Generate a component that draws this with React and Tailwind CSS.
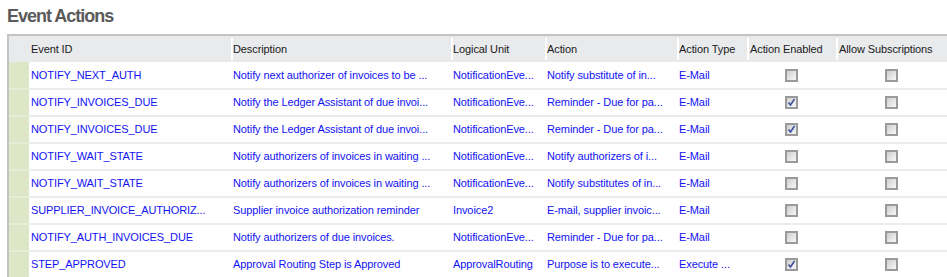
import React from "react";

const rows = [
  {
    id: "NOTIFY_NEXT_AUTH",
    desc: "Notify next authorizer of invoices to be ...",
    lu: "NotificationEve...",
    action: "Notify substitute of in...",
    type: "E-Mail",
    enabled: false,
  },
  {
    id: "NOTIFY_INVOICES_DUE",
    desc: "Notify the Ledger Assistant of due invoi...",
    lu: "NotificationEve...",
    action: "Reminder - Due for pa...",
    type: "E-Mail",
    enabled: true,
  },
  {
    id: "NOTIFY_INVOICES_DUE",
    desc: "Notify the Ledger Assistant of due invoi...",
    lu: "NotificationEve...",
    action: "Reminder - Due for pa...",
    type: "E-Mail",
    enabled: true,
  },
  {
    id: "NOTIFY_WAIT_STATE",
    desc: "Notify authorizers of invoices in waiting ...",
    lu: "NotificationEve...",
    action: "Notify authorizers of i...",
    type: "E-Mail",
    enabled: false,
  },
  {
    id: "NOTIFY_WAIT_STATE",
    desc: "Notify authorizers of invoices in waiting ...",
    lu: "NotificationEve...",
    action: "Notify substitutes of in...",
    type: "E-Mail",
    enabled: false,
  },
  {
    id: "SUPPLIER_INVOICE_AUTHORIZ...",
    desc: "Supplier invoice authorization reminder",
    lu: "Invoice2",
    action: "E-mail, supplier invoic...",
    type: "E-Mail",
    enabled: false,
  },
  {
    id: "NOTIFY_AUTH_INVOICES_DUE",
    desc: "Notify authorizers of due invoices.",
    lu: "NotificationEve...",
    action: "Reminder - Due for pa...",
    type: "E-Mail",
    enabled: false,
  },
  {
    id: "STEP_APPROVED",
    desc: "Approval Routing Step is Approved",
    lu: "ApprovalRouting",
    action: "Purpose is to execute...",
    type: "Execute ...",
    enabled: true,
  },
];

const Checkbox = ({ checked }) => (
  <span className="relative inline-block w-[13px] h-[13px] border-2 border-[#9a9a9a] bg-gradient-to-br from-[#cfcfcf] to-[#f7f7f7] align-middle">
    {checked && (
      <svg viewBox="0 0 9 9" className="absolute inset-0 w-[9px] h-[9px]">
        <path d="M1.5 4.5 L3.5 7 L7.5 1" fill="none" stroke="#3d4f9e" strokeWidth="1.6" />
      </svg>
    )}
  </span>
);

const headers = [
  "Event ID",
  "Description",
  "Logical Unit",
  "Action",
  "Action Type",
  "Action Enabled",
  "Allow Subscriptions",
];

const App = () => {
  return (
    <div className="w-[947px] h-[277px] overflow-hidden bg-white" style={{ fontFamily: '"Liberation Sans", Arial, sans-serif' }}>
      {/* Title */}
      <div className="pl-[7px] pt-[4px] h-[34px] text-[18px] font-bold text-[#5a5a5a] tracking-[-1px] leading-[24px]">
        Event Actions
      </div>

      {/* Table */}
      <div className="ml-[7px] border-l-2 border-t-2 border-[#c3c3c3]">
        <table className="table-fixed border-collapse w-[960px] text-[11px] tracking-[-0.1px]">
          <colgroup>
            <col className="w-[20px]" />
            <col className="w-[202px]" />
            <col className="w-[220px]" />
            <col className="w-[94px]" />
            <col className="w-[132px]" />
            <col className="w-[70px]" />
            <col className="w-[89px]" />
            <col className="w-[133px]" />
          </colgroup>
          <thead>
            <tr className="h-[26px] bg-[#e9eaec]">
              <th className="p-0"></th>
              {headers.map((h, i) => (
                <th key={i} className="p-0 font-normal text-left text-[#1a1a1a]">
                  <div
                    className={`h-[22px] flex items-center whitespace-nowrap overflow-hidden ${
                      i === 0 ? "pl-[2px]" : "border-l-2 border-white"
                    } ${i >= 5 ? "pl-[1px]" : ""}`}
                  >
                    {h}
                  </div>
                </th>
              ))}
            </tr>
          </thead>
          <tbody>
            {rows.map((r, i) => (
              <tr key={i} className="h-[27px] text-[#1212f5]">
                <td className="p-0 bg-[#dde7c7] border-b-2 border-[#e6ecd6]"></td>
                <td className="p-0 pl-[2px] border-b-2 border-[#ececec] whitespace-nowrap overflow-hidden">{r.id}</td>
                <td className="p-0 pl-[2px] border-b-2 border-[#ececec] whitespace-nowrap overflow-hidden">{r.desc}</td>
                <td className="p-0 pl-[2px] border-b-2 border-[#ececec] whitespace-nowrap overflow-hidden">{r.lu}</td>
                <td className="p-0 pl-[2px] border-b-2 border-[#ececec] whitespace-nowrap overflow-hidden">{r.action}</td>
                <td className="p-0 pl-[2px] border-b-2 border-[#ececec] whitespace-nowrap overflow-hidden">{r.type}</td>
                <td className="p-0 border-b-2 border-[#ececec] text-center">
                  <div className="flex justify-center">
                    <Checkbox checked={r.enabled} />
                  </div>
                </td>
                <td className="p-0 border-b-2 border-[#ececec]">
                  <div className="pl-[49px] flex">
                    <Checkbox checked={false} />
                  </div>
                </td>
              </tr>
            ))}
          </tbody>
        </table>
      </div>
    </div>
  );
};

export default App;
